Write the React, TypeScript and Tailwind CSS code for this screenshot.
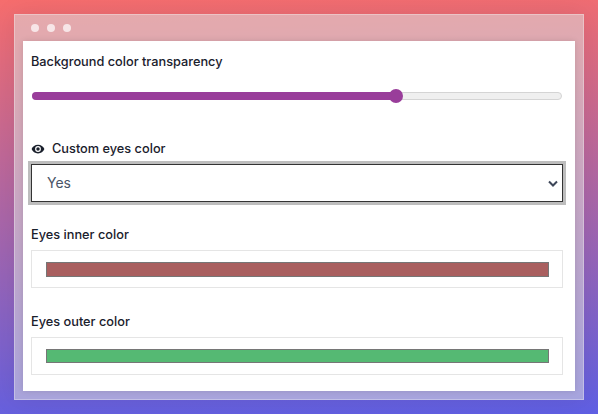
import React from "react";

function Swatch({ label, color, mt, h }: { label: string; color: string; mt: string; h: string }) {
  return (
    <div className={mt}>
      <div className="text-[12.75px] leading-[18px] font-[450] text-[#1a202c]">{label}</div>
      <div className="mt-[6px] h-[38px] border border-[#e5e5e5] pl-[14px] pr-[13px] pt-[11px]">
        <div className={`${h} border border-[#767676]`} style={{ backgroundColor: color }} />
      </div>
    </div>
  );
}

export default function App() {
  return (
    <div className="w-[598px] h-[414px] p-[14px] overflow-hidden bg-[linear-gradient(178deg,#f66d6d_0%,#5f5fe3_100%)] font-['Inter',sans-serif]">
      <div className="h-[386px] border border-white/30 bg-[#dcdcdc]/55 shadow-[0_0_24px_rgba(0,0,0,0.08)] px-[8px] pb-[8px] flex flex-col">
        <div className="h-[26px] flex items-center gap-[8px] pl-[8px] shrink-0">
          <span className="w-[8px] h-[8px] rounded-full bg-white/70" />
          <span className="w-[8px] h-[8px] rounded-full bg-white/70" />
          <span className="w-[8px] h-[8px] rounded-full bg-white/70" />
        </div>
        <div className="flex-1 bg-white pl-[8px] pr-[12px] pt-[12px] shadow-[0_0_6px_rgba(0,0,0,0.12)]">
          <div className="text-[12.75px] leading-[18px] font-[450] text-[#1a202c]">Background color transparency</div>
          <div className="mt-[21px] relative h-[8px] mx-[1px] rounded-full bg-[#efefef] border border-[#d4d4d4]">
            <div className="absolute -left-px -top-px h-[8px] w-[365px] rounded-l-full bg-[#993d9a]" />
            <div className="absolute left-[356px] top-[-4px] w-[14px] h-[14px] rounded-full bg-[#993d9a]" />
          </div>
          <div className="mt-[40px] flex items-center gap-[7px] h-[18px]">
            <svg width="14" height="14" viewBox="0 0 24 24" fill="#1a202c">
              <path d="M12 4.5C7 4.5 2.7 7.6 1 12c1.7 4.4 6 7.5 11 7.5s9.3-3.1 11-7.5c-1.7-4.4-6-7.5-11-7.5zm0 12.5a5 5 0 1 1 0-10 5 5 0 0 1 0 10zm0-8a3 3 0 1 0 0 6 3 3 0 0 0 0-6z" />
            </svg>
            <span className="text-[12.75px] leading-[18px] font-[450] text-[#1a202c]">Custom eyes color</span>
          </div>
          <div className="mt-[6px] relative h-[38px] border border-[#333] outline-[3px] outline-solid outline-[#bdbdbd] flex items-center pl-[15px] pb-[2px] bg-white">
            <span className="text-[14px] text-[#4a5568]">Yes</span>
            <svg className="absolute right-[4px] top-[15px]" width="10" height="8" viewBox="0 0 10 8" fill="none" stroke="#3d4658" strokeWidth="2">
              <path d="M1 1.5 5 5.5 9 1.5" />
            </svg>
          </div>
          <Swatch label="Eyes inner color" color="#a95f5f" mt="mt-[24px]" h="h-[15px]" />
          <Swatch label="Eyes outer color" color="#55b973" mt="mt-[25px]" h="h-[14px]" />
        </div>
      </div>
    </div>
  );
}
